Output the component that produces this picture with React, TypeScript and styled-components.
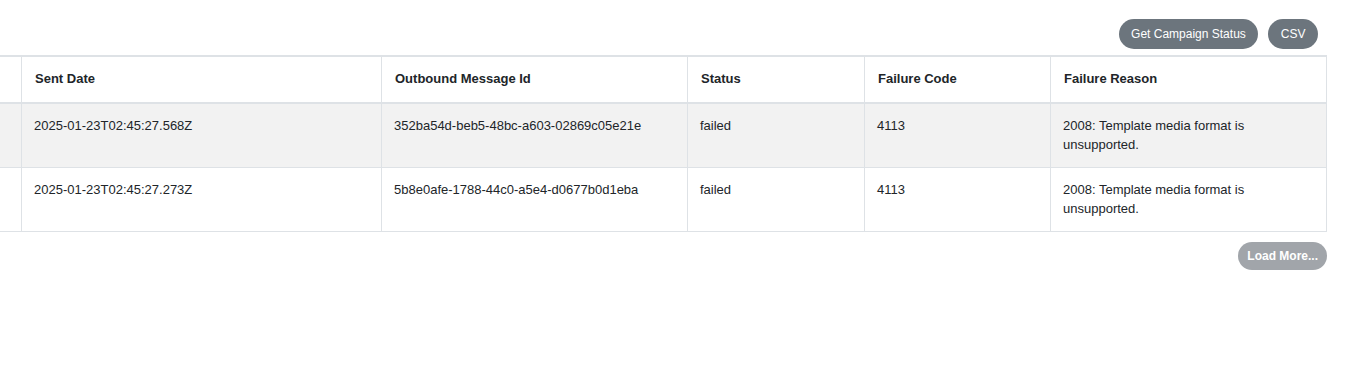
import * as React from 'react'
import styled, {createGlobalStyle} from 'styled-components'

const GlobalStyle = createGlobalStyle`
  html, body {
    margin: 0;
    padding: 0;
    background: #FFFFFF;
    font-family: "Liberation Sans", Arial, sans-serif;
    color: #212529;
  }
`

const Page = styled.div`
  width: 1351px;
  padding-top: 19px;
`

const Toolbar = styled.div`
  display: flex;
  justify-content: flex-end;
  gap: 10px;
  padding-right: 33px;
  margin-bottom: 6px;
`

const PillButton = styled.button<{ faded?: boolean, bold?: boolean, h?: number, px?: number }>`
  box-sizing: border-box;
  height: ${({h}) => h || 30}px;
  padding: 0 ${({px}) => px || 12.5}px;
  border: none;
  border-radius: 999px;
  background-color: ${({faded}) => faded ? '#a1a5aa' : '#6c757d'};
  color: #FFFFFF;
  font-family: "Liberation Sans", Arial, sans-serif;
  font-size: 12px;
  font-weight: ${({bold}) => bold ? 'bold' : 'normal'};
  cursor: pointer;
`

const TableWrap = styled.div`
  display: flex;
  justify-content: flex-end;
  overflow: hidden;
  padding-right: 24px;
`

const Table = styled.table`
  flex-shrink: 0;
  border-collapse: collapse;
  table-layout: fixed;
  width: 1405px;
  font-size: 13px;
  line-height: 19px;
  border-top: 2px solid #dee2e6;
`

const Th = styled.th`
  text-align: left;
  font-weight: bold;
  padding: 12px 12px 14px 13px;
  border: 1px solid #dee2e6;
  border-top: none;
  border-bottom: 2px solid #dee2e6;
  vertical-align: top;
`

const Row = styled.tr<{ striped?: boolean }>`
  background-color: ${({striped}) => striped ? '#f2f2f2' : '#FFFFFF'};
`

const Td = styled.td`
  padding: 12px 12px 13px 12px;
  border: 1px solid #dee2e6;
  vertical-align: top;
`

const Footer = styled.div`
  display: flex;
  justify-content: flex-end;
  padding-right: 24px;
  margin-top: 10px;
`

const columns = [
  { "key": "hidden", "title": "", "width": 100 },
  { "key": "sent", "title": "Sent Date", "width": 360 },
  { "key": "id", "title": "Outbound Message Id", "width": 306 },
  { "key": "status", "title": "Status", "width": 177 },
  { "key": "code", "title": "Failure Code", "width": 186 },
  { "key": "reason", "title": "Failure Reason", "width": 276 },
]

const rows = [
  { "key": "r1", "sent": "2025-01-23T02:45:27.568Z", "id": "352ba54d-beb5-48bc-a603-02869c05e21e", "status": "failed", "code": "4113", "reason": "2008: Template media format is unsupported." },
  { "key": "r2", "sent": "2025-01-23T02:45:27.273Z", "id": "5b8e0afe-1788-44c0-a5e4-d0677b0d1eba", "status": "failed", "code": "4113", "reason": "2008: Template media format is unsupported." },
]

const App = () => {
  return (
    <Page>
      <GlobalStyle/>
      <Toolbar>
        <PillButton>Get Campaign Status</PillButton>
        <PillButton>CSV</PillButton>
      </Toolbar>
      <TableWrap>
        <Table>
          <colgroup>
            {columns.map(c => <col key={c.key} style={{width: c.width}}/>)}
          </colgroup>
          <thead>
            <tr>
              {columns.map(c => <Th key={c.key}>{c.title}</Th>)}
            </tr>
          </thead>
          <tbody>
            {rows.map((r, i) => {
              return (
                <Row key={r.key} striped={i % 2 === 0}>
                  <Td></Td>
                  <Td>{r.sent}</Td>
                  <Td>{r.id}</Td>
                  <Td>{r.status}</Td>
                  <Td>{r.code}</Td>
                  <Td>{r.reason}</Td>
                </Row>
              )
            })}
          </tbody>
        </Table>
      </TableWrap>
      <Footer>
        <PillButton faded bold h={28} px={9}>Load More...</PillButton>
      </Footer>
    </Page>
  )
}

export default App
